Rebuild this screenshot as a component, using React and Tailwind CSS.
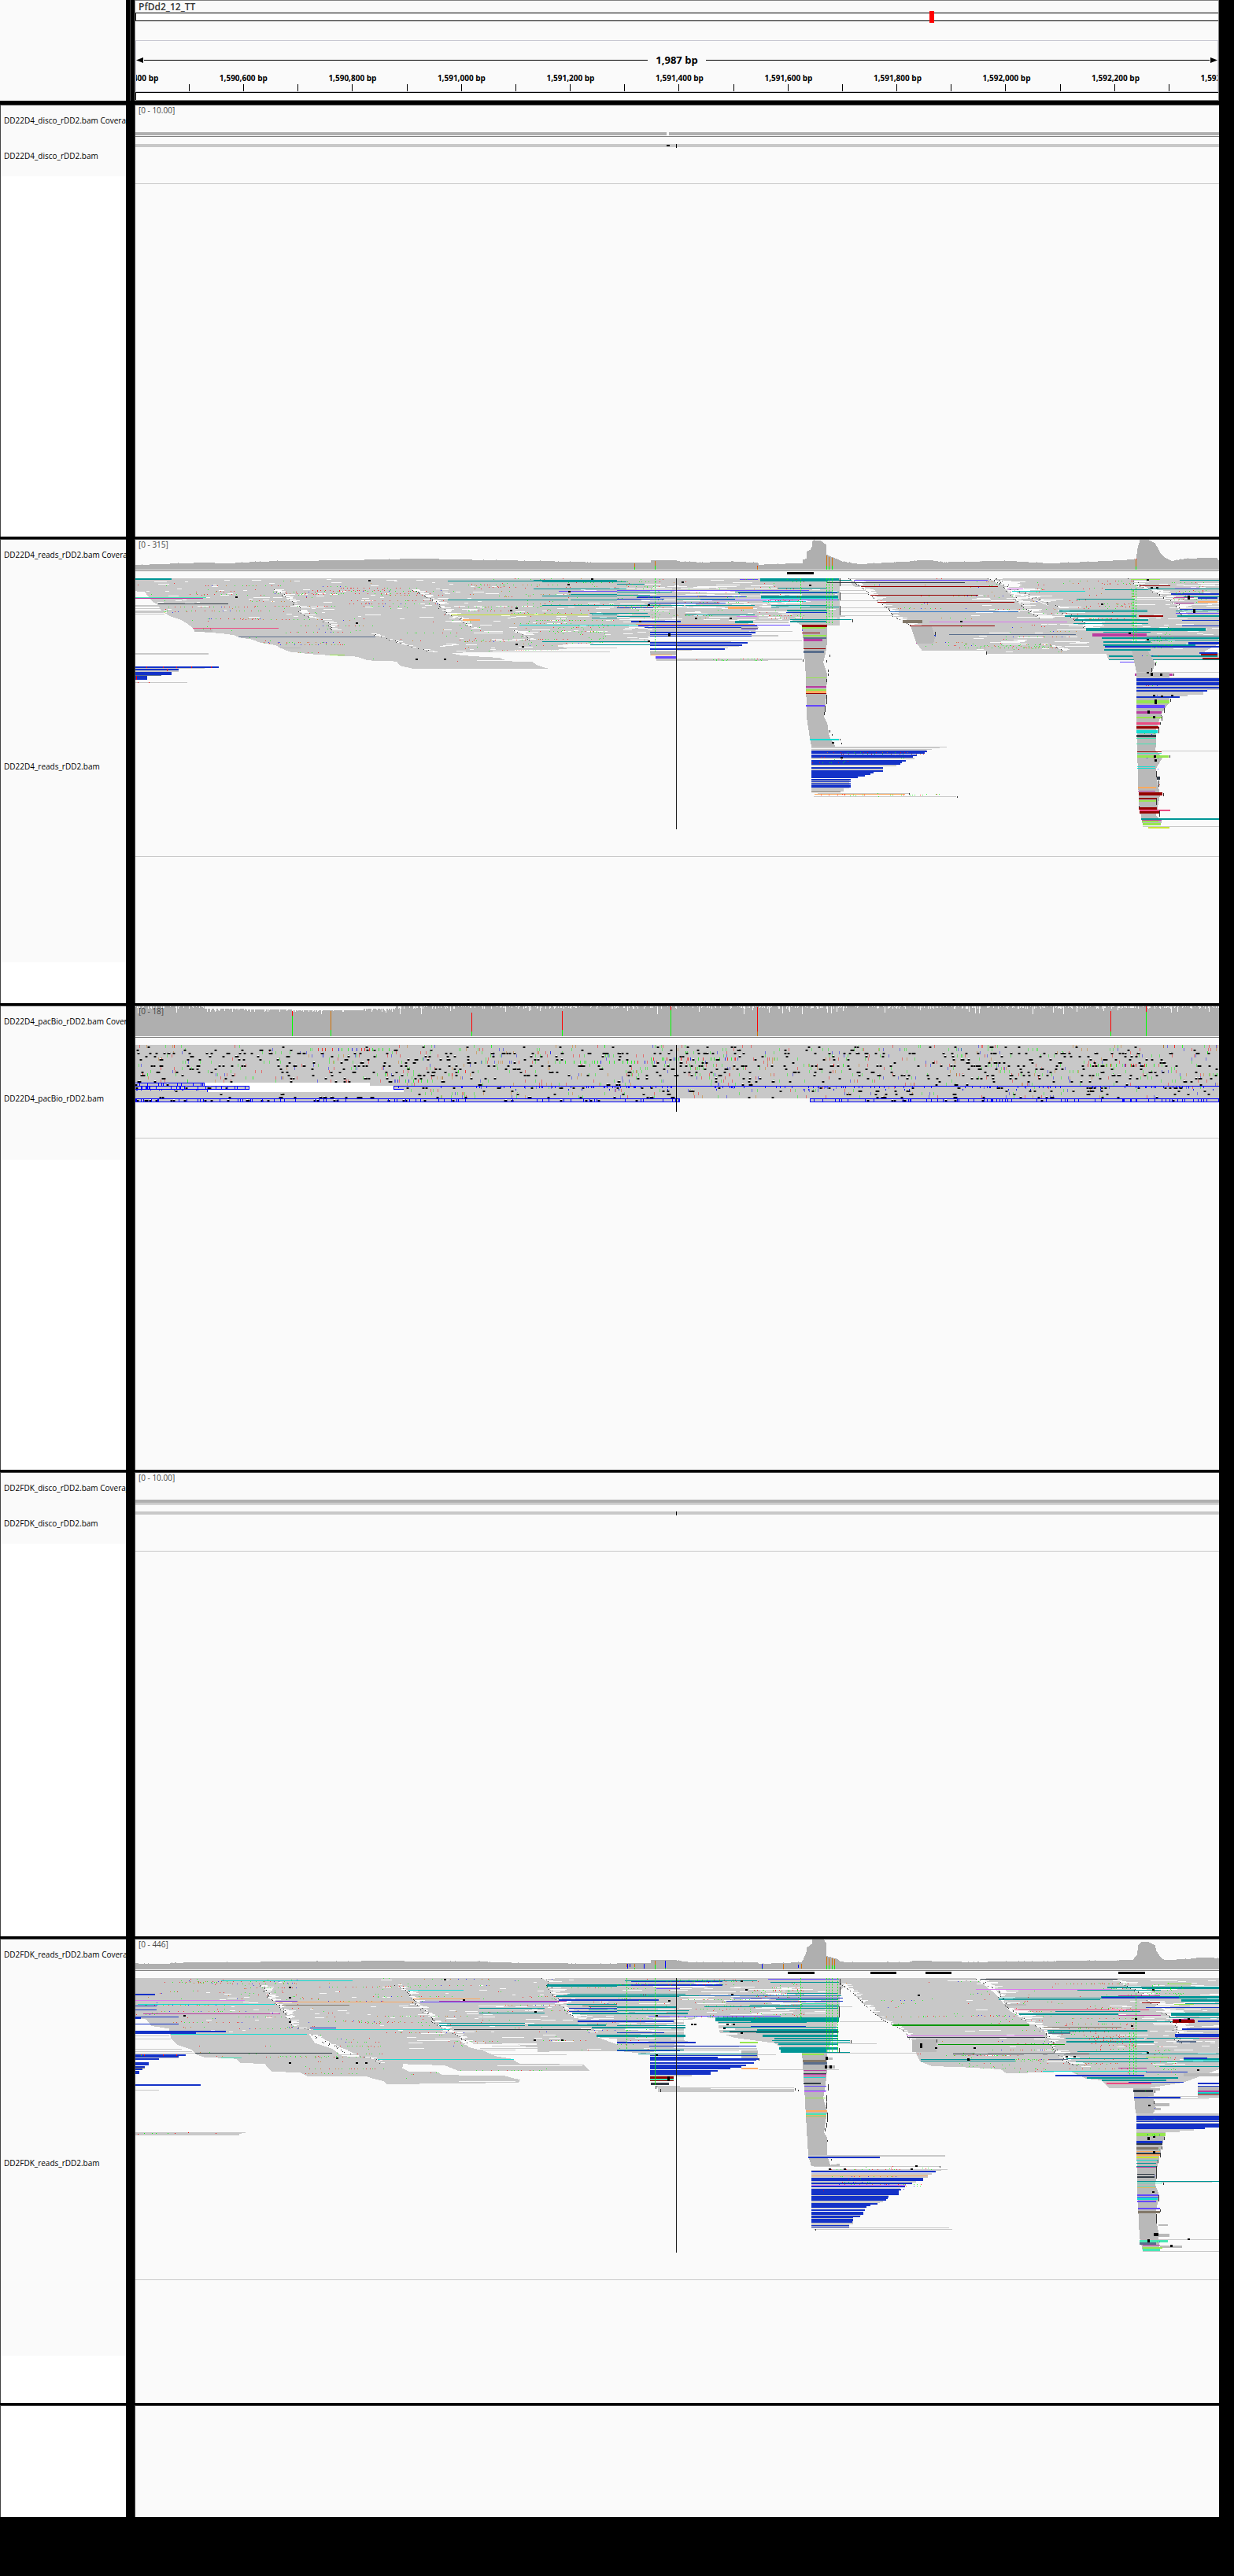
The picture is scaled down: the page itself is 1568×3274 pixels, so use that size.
import React from "react";

const C = {
  bg: "#fafafa",
  gray: "#c8c8c8",
  mid: "#b9b9b9",
  teal: "#009696",
  blue: "#1432c8",
  violet: "#6446ff",
  magenta: "#b93ca0",
  red: "#960000",
  pink: "#eb4b82",
  orange: "#ffaa5f",
  lime: "#96e650",
  cyan: "#14dcd2",
  slate: "#5a6e8c",
  coal: "#323c46",
  taupe: "#827869",
  orchid: "#dc78f0",
  mint: "#46e6b4",
  azure: "#3278c8",
  yellow: "#c8e632",
  green: "#009600",
  black: "#000000",
  A: "#00ff00",
  T: "#ff0000",
  C: "#0000ff",
  G: "#d17105",
};

function random(seed) {
  let s = seed;
  return () => {
    s = (s * 1664525 + 1013904223) % 4294967296;
    return s / 4294967296;
  };
}

// "x1 x2 y h" entries separated by commas; the height defaults to one row.
const barPath = (list) =>
  list
    .split(",")
    .map((item) => {
      const [a, b, y, h = 3] = item.trim().split(/\s+/).map(Number);
      return `M${a} ${y}H${b}v${h}H${a}z`;
    })
    .join("");

const Bars = ({ color, list }) => <path fill={color} d={barPath(list)} />;

// Horizontal streaks scattered over a box, snapped to read rows.
function Streaks({ box, n, min = 8, max = 40, color = C.bg, seed = 1 }) {
  const r = random(seed);
  const [x1, x2, y1, y2] = box;
  let d = "";
  for (let i = 0; i < n; i++) {
    const y = y1 + Math.floor((r() * (y2 - y1)) / 3) * 3;
    const w = Math.round((min + r() * r() * (max - min)) / 2) * 2;
    const x = x1 + Math.floor((r() * (x2 - x1)) / 2) * 2;
    d += `M${x} ${y}H${Math.min(x + w, x2)}v3H${x}z`;
  }
  return <path fill={color} d={d} />;
}

// Mismatched bases: runs of dots that share a row, or a column of a variant.
function Bases({ box, n, seed = 7, colors = "TTAAATGC", h = 3, step = 3, fade = false }) {
  const r = random(seed);
  const [x1, x2, y1, y2] = box;
  const paths = {};
  let left = n;
  while (left > 0) {
    const y = y1 + Math.floor((r() * (y2 - y1)) / step) * step;
    const run = r() < 0.25 && !fade ? 6 + Math.floor(r() * 14) : 1 + Math.floor(r() * 2);
    let x = x1 + r() * (x2 - x1);
    for (let k = 0; k < run; k++) {
      const c = colors[Math.floor(r() * colors.length)];
      const px = Math.round(x / 2) * 2;
      if (px < x2) paths[c] = (paths[c] || "") + `M${px} ${y}h2v${h}h-2z`;
      x += 4 + r() * 20;
      left--;
    }
  }
  return Object.keys(paths).map((c) => (
    <path key={c} fill={C[c] || c} fillOpacity={fade ? 0.45 : 0.75} d={paths[c]} />
  ));
}

// The ragged boundary between two stacks of reads.
function Seam({ points, seed = 3, spread = 14, width = 22 }) {
  const r = random(seed);
  const p = points.split(" ").map((s) => s.split(",").map(Number));
  let white = "";
  let dark = "";
  for (let i = 1; i < p.length; i++) {
    const [ax, ay] = p[i - 1];
    const [bx, by] = p[i];
    for (let y = ay; y < by; y += 3) {
      const x = Math.round((ax + ((bx - ax) * (y - ay)) / (by - ay) + r() * spread) / 2) * 2;
      const w = Math.round((4 + r() * width) / 2) * 2;
      if (r() < 0.72) white += `M${x} ${y}h${w}v3h-${w}z`;
      if (r() < 0.6) dark += `M${x - 2} ${y}h2v3h-2z`;
    }
  }
  return (
    <>
      <path fill={C.bg} d={white} />
      <path fill="#323232" d={dark} />
    </>
  );
}

const Inserts = ({ list }) => (
  <path
    fill={C.black}
    d={list
      .split(",")
      .map((s) => s.trim().split(/\s+/).map(Number))
      .map(([x, y, h = 6]) => `M${x} ${y}h6v${h}h-6z`)
      .join("")}
  />
);

// A tile is plotted at two units per pixel across and three units per pixel down.
const Tile = ({ x, y, children }) => (
  <g transform={`translate(${x},${-y / 3}) scale(0.5,${1 / 3})`}>{children}</g>
);

function Plot({ height, children }) {
  return (
    <svg
      className="block w-full"
      height={height}
      viewBox={`0 0 1377 ${height}`}
      preserveAspectRatio="none"
      shapeRendering="crispEdges"
      aria-hidden="true"
    >
      {children}
    </svg>
  );
}

// Steps a depth profile so that it looks binned, one bin per few bases.
function Depth({ points, base, seed = 5 }) {
  const r = random(seed);
  const p = points.split(" ").map((s) => s.split(",").map(Number));
  let d = `M${p[0][0]} ${base}`;
  for (let i = 1; i < p.length; i++) {
    const [ax, ay] = p[i - 1];
    const [bx, by] = p[i];
    for (let x = ax; x < bx; x += 2) {
      const y = ay + ((by - ay) * (x - ax)) / (bx - ax) - (r() < 0.06 ? 2 : 0);
      d += `H${x}V${Math.round(y / 3) * 3}`;
    }
  }
  d += `H${p[p.length - 1][0]}V${base}z`;
  return <path fill="#afafaf" d={d} />;
}

function FlatCoverage({ gap }) {
  return (
    <Plot height={38}>
      <rect x="0" y="34" width="1377" height="4" fill="#afafaf" />
      {gap && <rect x="675" y="34" width="3" height="4" fill={C.bg} />}
    </Plot>
  );
}

function FlatReads({ gap }) {
  return (
    <Plot height={59}>
      <rect x="0" y="9" width="1377" height="4" fill={C.gray} />
      {gap && <rect x="675" y="10" width="4" height="2" fill="#000" />}
      <rect x="687" y="9" width="1" height="5" fill="#000" />
    </Plot>
  );
}

function ReadsCoverageA() {
  return (
    <Plot height={38}>
      <Tile x={-172} y={48}>
        <Depth base={162} points="344,144 390,142 440,139 500,136 590,137 650,132 714,129 840,127 880,126 940,124 1030,121 1105,121 1160,124 1240,125 1300,127 1395,130 1470,133 1570,136" />
      </Tile>
      <Tile x={612} y={48}>
        <Depth base={162} seed={9} points="0,136 84,136 86,127 150,127 160,131 210,134 310,132 355,136 360,144 385,141 470,138 472,123 480,120 482,93 490,86 494,75 496,54 500,50 514,50 522,57 530,66 532,105 548,115 560,122 570,130 590,135 610,140 630,140 700,134 750,130 770,125 790,125 810,129 830,134 900,131 1000,129 1040,133 1100,138 1200,132 1240,129 1300,124 1318,122 1322,80 1328,48 1350,48 1366,60 1380,98 1390,115 1410,129 1440,121 1480,118 1524,118 1530,130" />
        <Bars color={C.G} list="44 46 138 15, 96 98 129 20, 356 358 150 12, 532 534 108 39, 538 540 114 36, 546 548 117 33, 1318 1320 123 27" />
        <Bars color={C.A} list="44 46 153 9, 96 98 147 15, 532 534 147 15, 538 540 150 12, 546 548 147 15, 1318 1320 150 12" />
        <Bars color={C.T} list="356 358 147 3, 1318 1320 120 3" />
      </Tile>
    </Plot>
  );
}

function ReadsA() {
  const west =
    "344,195 1568,195 1568,441 1450,444 1410,453 1440,459 1440,468 1268,470 1230,476 1145,480 1165,487 1200,492 1270,498 1284,507 1140,510 1352,512 1362,524 1380,534 1396,540 1050,540 1016,528 1008,512 935,508 908,494 850,490 790,484 735,475 712,460 700,450 660,440 640,428 612,422 595,412 562,405 516,400 494,398 492,388 478,370 462,355 430,338 412,320 400,295 386,282 376,262 368,247 344,244";
  const east1 = "0,195 566,195 566,375 470,375 440,350 435,366 330,366 360,381 350,396 290,402 84,440 0,440";
  const east2 =
    "588,195 945,195 980,225 1000,252 1035,262 1130,320 1170,350 1195,380 1235,430 1250,484 937,484 937,472 775,470 760,440 752,400 745,375 726,355 700,338 690,310 665,288 645,262 630,240 600,224";
  const east3 =
    "1120,195 1530,195 1530,445 1490,475 1530,480 1530,508 1250,508 1240,470 1235,440 1205,415 1190,380 1150,345 1120,320 1090,292 1045,265 980,232 960,195";
  return (
    <Plot height={362}>
      <defs>
        <clipPath id="a-west"><polygon points={west} /></clipPath>
        <clipPath id="a-mid"><polygon points={east2} /></clipPath>
        <clipPath id="a-end"><polygon points={east3} /></clipPath>
      </defs>
      <Tile x={-172} y={168}>
        <polygon fill={C.gray} points={west} />
        <g clipPath="url(#a-west)">
          <Streaks box={[360, 1560, 198, 350]} n={110} max={44} seed={11} />
          <Streaks box={[1100, 1560, 300, 480]} n={60} max={90} seed={12} />
          <Bases box={[344, 1130, 195, 405]} n={360} seed={21} />
          <Bases box={[1130, 1568, 195, 470]} n={330} seed={22} colors="AAAATTG" />
          <Bases box={[560, 1500, 400, 540]} n={170} seed={23} colors="TTAAGC" />
          <Bases box={[1340, 1540, 370, 440]} n={110} seed={24} colors="AAAAT" />
          <Bases box={[344, 1568, 225, 265]} n={120} seed={28} colors="TTTA" />
        </g>
        <Seam points="690,235 740,285 765,335 815,350 840,390" />
        <Seam points="1045,237 1095,275 1130,330 1165,345 1195,385" seed={4} />
        <Seam points="940,405 1010,440 1095,475" seed={5} width={14} />
        <Seam points="1300,390 1345,430" seed={6} width={26} />
        <Bars color={C.gray} list="344 410 297 6, 344 412 309, 344 416 318 9, 344 417 330, 344 530 480 6, 344 454 546 6, 344 520 537, 344 476 591, 1140 1550 474, 1400 1568 459" />
        <Bars color={C.teal} list="344 436 195 6, 1138 1568 204, 1356 1568 201, 1378 1568 207, 1356 1568 234, 1378 1568 261, 1450 1568 255, 1138 1444 276, 1450 1568 276, 1378 1568 297, 1500 1568 327, 1504 1568 333, 1504 1568 345, 1378 1568 435, 1500 1568 447" />
        <Bars color={C.blue} list="344 556 531 6, 344 454 540 6, 344 436 552 12, 344 374 567 15" />
        <Bars color={C.magenta} list="344 516 270" />
        <Bars color={C.pink} list="490 708 384" />
        <Bars color={C.coal} list="402 580 291" />
        <Bars color={C.slate} list="606 954 417, 344 410 564" />
        <Bars color={C.mint} list="344 524 267" />
        <Bars color={C.lime} list="838 876 486" />
        <Bars color={C.yellow} list="1146 1494 333" />
        <Bars color={C.orange} list="1176 1220 351 6" />
        <Bars color={C.cyan} list="1320 1568 372" />
        <Bars color={C.violet} list="1420 1568 243" />
        <Bars color={C.mid} list="494 540 390 9, 712 764 459" />
        <Bars color={C.T} list="350 352 591, 378 380 591, 372 374 531 6, 414 416 531 6, 448 450 531 6, 486 488 531 6, 536 538 531 6, 424 426 540 9, 346 348 567 15" />
        <Inserts list="936 202, 1442 216, 597 264, 903 363, 1295 315, 1310 307, 1310 444, 1326 453, 1056 501, 1128 502, 1502 195, 1443 243" />
      </Tile>
      <Tile x={612} y={168}>
        <polygon fill={C.gray} points={east1} />
        <polygon fill={C.gray} points={east2} />
        <polygon fill={C.gray} points={east3} />
        <Streaks box={[0, 470, 210, 360]} n={80} min={20} max={150} seed={31} />
        <Streaks box={[130, 560, 198, 360]} n={50} min={10} max={80} seed={32} />
        <Streaks box={[0, 90, 360, 440]} n={26} min={20} max={90} seed={33} />
        <Bars color={C.bg} list="566 700 312 60, 566 660 270 42, 566 630 228 42, 0 84 440 60, 84 350 400 40" />
        <Bars color={C.gray} list="566 620 204, 566 640 219, 566 648 240, 566 640 252, 566 690 279, 566 690 306, 566 690 321, 536 700 336, 536 580 339, 340 446 396, 84 350 393, 160 470 432, 84 410 411 6, 84 150 470 20, 150 310 453, 150 282 459, 150 190 468, 100 384 501 9, 384 470 504, 98 470 501, 940 1245 478 6, 84 290 435 6" />
        <g clipPath="url(#a-mid)">
          <Streaks box={[900, 1200, 195, 480]} n={55} min={14} max={120} seed={34} />
          <Bases box={[600, 1250, 195, 480]} n={230} seed={35} colors="TTAAAGC" />
          <Bases box={[800, 1120, 440, 470]} n={80} seed={36} colors="AAATG" />
        </g>
        <g clipPath="url(#a-end)">
          <Streaks box={[1300, 1530, 210, 470]} n={75} min={12} max={110} seed={37} />
          <Bases box={[1060, 1320, 200, 350]} n={170} seed={38} colors="AATTTG" />
        </g>
        <Seam points="588,195 630,240 645,262 665,288 690,310 700,338 726,355 745,375" seed={41} spread={4} width={26} />
        <Seam points="940,195 980,225 995,255 1030,310 1075,350" seed={42} width={44} />
        <Seam points="960,195 985,232 1045,265 1090,292 1130,330 1165,360 1190,390" seed={43} spread={24} width={60} />
        <Seam points="1295,195 1320,225 1380,260 1420,300 1425,340" seed={44} spread={20} width={34} />
        <Seam points="1075,445 1115,460 1125,472" seed={46} width={30} />
        <Bars color={C.teal} list="364 564 195 9, 0 24 207, 0 70 216, 0 24 234, 540 596 201, 364 536 204, 408 534 231, 0 140 246, 300 564 246, 0 84 258, 366 562 261 9, 150 300 273, 392 564 276, 0 170 297, 174 350 297, 392 534 297, 392 564 303, 432 532 315 6, 0 78 327, 174 350 333, 0 84 339, 440 596 351, 440 532 357 6, 300 345 357 8, 0 80 435, 0 84 447, 1430 1530 201, 1240 1350 237, 1350 1530 234, 1168 1316 273, 1124 1348 315, 1124 1348 321, 1138 1320 336 6, 1424 1530 336 6, 1164 1350 351 6, 1192 1496 384 12, 1236 1356 399, 1232 1530 420 6, 1236 1356 435 6, 1236 1470 447 6, 1350 1530 429, 1238 1356 465 6, 1250 1526 489 6, 1250 1530 504, 1160 1350 366, 1440 1530 264, 1420 1530 318" />
        <Bars color={C.blue} list="308 560 249, 50 110 264 6, 110 330 264, 0 120 273, 80 276 288, 0 92 306, 430 534 324, 36 162 357 6, 54 356 375, 70 316 381, 84 352 399 6, 84 342 408, 84 342 414, 84 332 438 6, 84 318 447 6, 84 274 462 6, 756 810 411 6, 1408 1530 252 6, 1476 1526 267 6, 1430 1530 312, 1436 1530 354, 1240 1530 453 6, 1452 1530 438 9, 1480 1526 477 6, 1436 1530 375" />
        <Bars color={C.violet} list="312 358 198, 602 942 201, 0 488 240, 212 560 276, 470 528 390 6, 54 440 372, 98 152 492 9, 316 358 387, 1278 1346 513, 1420 1530 327, 480 528 678 6, 1320 1392 678 12" />
        <Bars color={C.coal} list="534 884 210, 752 802 396, 474 516 396, 474 534 435, 1320 1388 690, 1320 1384 717, 1320 1370 792 9, 1324 1380 951 12, 1326 1370 1062 6" />
        <Bars color={C.cyan} list="366 562 270, 1004 1190 243, 370 480 282, 0 54 372" />
        <Bars color={C.red} list="620 968 225, 644 918 258, 662 1010 285, 744 960 375, 1328 1406 222, 1326 1388 336 6, 1484 1526 483 6, 1488 1530 498 6" />
        <Bars color={C.azure} list="694 1020 321" />
        <Bars color={C.orchid} list="794 1144 360, 992 1032 234, 304 356 339, 1418 1480 231" />
        <Bars color={C.slate} list="844 1166 408, 1208 1530 414" />
        <Bars color={C.taupe} list="726 776 354 12, 316 358 384" />
        <Bars color={C.orange} list="282 346 303 9, 48 350 369, 86 140 483 6, 1476 1526 282 6" />
        <Bars color={C.magenta} list="760 804 435 9, 1208 1346 405 12, 1416 1466 267, 1416 1466 288, 1316 1412 558 9" />
        <Bars color={C.lime} list="1306 1380 198" />
        <Bases box={[0, 120, 195, 355]} n={150} seed={51} colors="AAAAAT" />
        <Bases box={[130, 350, 195, 355]} n={90} seed={52} colors="AAATG" />
        <Bases box={[355, 475, 195, 350]} n={130} seed={53} colors="AATTT" />
        <Bases box={[1350, 1420, 380, 470]} n={90} seed={54} colors="AAAA" />
        <Bases box={[1410, 1500, 200, 300]} n={70} seed={57} colors="AAAT" />
        <Bases box={[180, 370, 501, 510]} n={40} seed={55} colors="AAAT" />
        <path stroke={C.A} strokeWidth="2" strokeDasharray="6 5" fill="none" d="M533 195V372M539 195V372M547 195V372M1319 220V440M1313 240V440M97 195V480M467 195V350M1309 240V380" />
        <path fill={C.mid} d="M470 372H534V440L530 480L524 515L534 560L532 640L526 725L534 745L540 800L555 836H494L490 805L482 725L480 570L474 440Z" />
        <path fill={C.mid} d="M746 378H800L808 420L804 445H762ZM1308 470H1348L1368 520L1360 552H1320ZM84 474H150V486H86Z" />
        <path fill={C.mid} d="M1320 552H1405L1404 668L1386 705L1370 770V830L1368 850L1386 880L1370 920L1372 960L1380 1020L1370 1100L1384 1120L1382 1138H1336L1326 1050L1322 850L1320 720Z" />
        <Bars color={C.gray} list="494 838 838, 494 820 841, 494 800 845, 494 785 849" />
        <Bars color={C.red} list="470 534 372 9, 470 516 402, 474 530 462, 480 532 633, 1320 1376 759 9, 1322 1384 855, 1326 1386 1011 12, 1326 1372 1032 6, 1326 1372 1067 10, 1328 1378 1083 9" />
        <Bars color={C.lime} list="470 530 382 6, 474 532 411 6, 480 532 573, 480 532 618 6, 1320 1404 660 12, 1320 1384 723 6, 1322 1402 870 9, 1326 1370 1042 4, 1334 1376 1119 6, 1336 1382 1128 9" />
        <Bars color={C.magenta} list="474 522 426 9, 480 532 606 6, 1320 1384 702 9, 1324 1368 1005, 1334 1384 1116" />
        <Bars color={C.slate} list="474 532 420 6, 474 526 471 9" />
        <Bars color={C.violet} list="480 528 678 6, 1320 1392 678 12" />
        <Bars color={C.orange} list="480 532 624 9, 502 732 1017, 1324 1370 990 6" />
        <Bars color={C.cyan} list="490 564 807 6, 1320 1374 774 12, 1320 1370 804, 1322 1368 912, 1322 1368 918" />
        <Bars color={C.mint} list="1320 1370 804, 1320 1370 825, 1322 1384 861" />
        <Bars color={C.coal} list="1320 1370 792 9" />
        <Bars color={C.pink} list="1320 1380 744 9, 1328 1406 1077 6" />
        <Bars color={C.gray} list="494 756 879 6, 494 710 906 6, 494 676 921 6, 494 590 960 35, 500 862 1026, 510 742 1014, 494 576 996 12, 1320 1530 552 3, 1320 1530 573 3, 1320 1530 588 3, 1320 1530 603 6, 1320 1530 615 6, 1320 1490 627 12, 1320 1450 639 6, 1384 1530 852, 1336 1530 1140" />
        <Bars color={C.blue} list="494 788 852 6, 494 782 858 6, 494 762 867 6, 494 752 873 6, 494 734 888 6, 494 724 894 6, 494 720 900 6, 494 676 915 6, 494 676 927 6, 494 652 933 6, 494 644 939 6, 494 630 945 6, 494 612 951 6, 494 594 960 6, 494 594 969, 494 594 975, 494 594 981 12, 1320 1530 576 12, 1320 1530 591 12, 1320 1530 609 6, 1320 1500 621 6, 1320 1430 645 6" />
        <Bars color={C.teal} list="1332 1530 1110 6" />
        <Bars color={C.yellow} list="1350 1404 1143 6" />
        <Bars color={C.taupe} list="494 568 1008" />
        <Bars color="#323232" list="540 542 487 9, 532 534 508 9, 536 538 544 9, 536 538 557 9, 532 534 578 12, 532 534 640 36, 528 530 680 24, 526 528 706 12, 540 542 775 9, 546 548 790 6, 566 568 807 6, 570 572 822 6, 742 744 1014 6, 864 866 1026 6, 1368 1370 516 12, 1358 1360 537 15, 1414 1416 558 9, 1406 1408 654 12, 1390 1392 690 18, 1384 1386 720 18, 1380 1382 744 9, 1376 1378 762 24, 1404 1406 870 9, 1370 1372 930 24, 1376 1378 966 24, 1388 1390 1014 12, 1370 1372 1035 24, 1378 1380 1080 24, 566 568 195 30, 566 568 250 30, 566 568 300 36, 598 600 350 12, 150 152 474 12, 808 810 399 12, 472 474 504 9, 938 940 474 12" />
        <Bases box={[494, 780, 852, 912]} n={50} seed={56} colors="ATG" />
        <Bases box={[505, 850, 1014, 1029]} n={26} seed={58} colors="AT" />
        <Bases box={[1330, 1380, 470, 1130]} n={50} seed={59} colors="ATC" />
        <Inserts list="163 208, 487 220, 78 294, 55 356, 130 405 12, 78 433, 197 346, 285 346, 871 357, 1230 292, 1300 401, 1450 260 15, 1463 312 15, 1356 555 12, 1345 553, 1380 557 9, 1365 657 18, 1348 699 12, 1361 720 9, 1363 870 9, 1366 884 9, 1362 640, 1408 640, 1382 641, 1345 198, 1356 229, 1370 229, 545 819, 568 876, 1345 427" />
        <rect x="432" y="171" width="68" height="9" fill="#000" />
        <rect x="150" y="195" width="2" height="957" fill="#1e1e1e" />
      </Tile>
    </Plot>
  );
}

function LongReadCoverage() {
  const r = random(77);
  let nicks = "";
  const cut = (x, d) => (nicks += `M${x} 0h1v${d}h-1z`);
  for (let x = 0; x < 1377; x++) {
    const thin = x > 88 && x < 330;
    if (r() < (thin ? 0.3 : 0.34)) cut(x, thin ? 4 + Math.floor(r() * 4) : 1 + Math.floor(r() * 2.6));
    if (r() < 0.03) cut(x, 5 + Math.floor(r() * 6));
  }
  return (
    <Plot height={38}>
      <rect width="1377" height="38" fill="#afafaf" />
      <path fill={C.bg} d={`${nicks}M88 0H330V3H290V5H200V4H140V3H88z`} />
      <Tile x={-172} y={207}>
        <Bars color={C.A} list="742 744 243 78, 840 842 297 24, 1198 1200 303 18, 1428 1430 297 24" />
        <Bars color={C.T} list="742 744 225 18, 1198 1200 231 72, 1428 1430 225 72" />
        <Bars color={C.G} list="840 842 225 72" />
      </Tile>
      <Tile x={612} y={207}>
        <Bars color={C.A} list="136 138 222 99, 1254 1256 303 18, 1344 1346 228 93" />
        <Bars color={C.T} list="136 138 207 15, 356 358 210 93, 1254 1256 225 78, 1344 1346 207 21" />
        <Bars color={C.G} list="356 358 303 18" />
      </Tile>
    </Plot>
  );
}

function LongReads() {
  const r = random(404);
  let dots = "";
  let shade = "";
  let halo = "";
  const rates = [15, 13, 60, 26, 28, 20, 54, 24, 30, 34, 24, 18, 10, 24, 22, 14, 26, 28];
  rates.forEach((n, row) => {
    const y = 11 + row * 4;
    for (let i = 0; i < n * 1.6; i++) {
      const x = Math.floor(r() * 1374);
      const hole =
        (row === 12 && x > 88 && x < 298) ||
        (row === 13 && x > 144 && x < 328) ||
        (row === 14 && x > 90 && x < 341) ||
        (row === 17 && x > 692 && x < 857);
      if (hole) continue;
      const w = r() < 0.15 ? 4 : 2;
      dots += `M${x} ${y}h${w}v2h-${w}z`;
      shade += `M${x - 1} ${y}h${w + 2}v2h-${w + 2}z`;
      if (r() < 0.35) halo += `M${x} ${y - 1}h2v1h-2z`;
    }
  });
  let notches = "";
  const notch = (x1, x2, y, n, h = 4) => {
    for (let i = 0; i < n; i++) notches += `M${Math.floor(x1 + r() * (x2 - x1))} ${y}h1v${h}h-1z`;
  };
  notch(0, 88, 57, 10);
  notch(0, 144, 61, 22);
  notch(0, 90, 65, 12, 2);
  notch(328, 1377, 61, 110, 3);
  notch(340, 1377, 65, 20, 2);
  notch(0, 692, 77, 62);
  notch(857, 1377, 77, 66);
  return (
    <Plot height={127}>
      <Tile x={0} y={-27}>
        <Bars color={C.gray} list="0 2754 0 219" />
        <Bars color="#ffffff" list="174 596 144 12, 289 656 156 12, 183 682 168 12" />
        <Bars color={C.bg} list="1384 1714 204 16" />
        <Bases box={[0, 2754, 0, 144]} n={620} h={12} step={12} colors="AATTCGA" fade seed={61} />
        <Bases box={[660, 2754, 144, 204]} n={160} h={12} step={12} colors="AATCG" fade seed={62} />
        <Bases box={[0, 2754, 0, 144]} n={90} h={12} step={12} colors="AATTC" seed={63} />
      </Tile>
      <path fill="#fff" d={halo} />
      <path fill="#000" fillOpacity="0.4" d={shade} />
      <path fill="#000" d={dots} />
      <path
        fill="none"
        stroke="#0000ff"
        d="M0 57.500H87.500V60.500M0 61.500H144.500V65.500H0M91.500 65.500V68.500M1377 61.500H328.500V65.500H341M0 77.500H691.500V81.500H0.500V77M1377 77.500H857.500V81.500H1377"
      />
      <path fill="#0000ff" d={notches} />
      <rect x="687" y="9" width="1" height="85" fill="#000" />
    </Plot>
  );
}

function ReadsCoverageB() {
  return (
    <Plot height={38}>
      <Tile x={-172} y={45}>
        <Depth base={159} seed={15} points="344,135 360,138 430,137 434,134 495,133 600,132 680,130 860,129 935,127 1020,127 1060,130 1210,129 1265,132 1310,134 1400,136 1570,138" />
      </Tile>
      <Tile x={612} y={45}>
        <Depth base={159} seed={16} points="0,136 84,136 86,124 150,124 170,129 190,132 315,131 355,133 360,138 400,136 468,132 472,122 480,94 482,75 494,62 496,45 524,45 530,58 532,108 548,115 560,120 566,130 600,132 740,132 750,127 790,127 830,130 920,131 1000,129 1100,129 1140,125 1240,127 1310,122 1320,105 1324,66 1332,54 1350,54 1366,66 1370,90 1380,112 1390,123 1450,120 1480,114 1530,116" />
        <Bars color={C.C} list="26 28 138 18, 32 34 138 12, 68 70 138 18, 122 124 126 30, 368 370 138 18, 460 462 142 12" />
        <Bars color={C.G} list="24 26 138 12, 44 46 138 12, 96 98 126 15, 422 424 138 21, 468 470 138 18, 532 534 111 33, 538 540 117 27, 546 548 117 27, 552 554 120 24" />
        <Bars color={C.A} list="44 46 153 6, 96 98 141 18, 122 124 153 6, 368 370 156, 532 534 144 15, 538 540 144 15, 546 548 144 15, 552 554 144 15" />
      </Tile>
    </Plot>
  );
}

function ReadsB() {
  const west =
    "344,192 1568,192 1568,470 1365,473 1365,457 1320,453 1318,444 1210,444 1190,455 1230,470 1260,490 1300,500 1320,518 1482,522 1500,546 1165,546 1130,525 1025,520 1022,535 1040,549 1110,550 1126,562 1280,564 1300,572 1322,580 1318,591 984,597 975,585 950,576 930,567 780,566 762,552 690,549 672,518 612,517 600,500 520,494 500,485 488,465 452,448 434,420 430,385 385,375 372,350 344,345";
  const east1 = "0,192 600,192 566,240 566,340 534,478 440,478 400,440 300,420 260,400 254,345 200,345 170,360 170,430 200,440 70,480 0,470";
  const east2 =
    "570,192 910,192 960,250 1000,320 1070,370 1100,420 1150,520 1210,546 990,556 975,540 880,532 800,528 770,510 760,480 750,430 730,395 700,370 670,345 640,310 620,280 600,250";
  const east3 =
    "930,192 1530,192 1530,540 1440,590 1350,612 1250,612 1230,582 1190,575 1150,546 1110,480 1090,420 1080,380 1030,340 990,300 965,240";
  return (
    <Plot height={392}>
      <defs>
        <clipPath id="b-west"><polygon points={west} /></clipPath>
        <clipPath id="b-mid"><polygon points={east2} /></clipPath>
        <clipPath id="b-end"><polygon points={east3} /></clipPath>
      </defs>
      <Tile x={-172} y={165}>
        <polygon fill={C.gray} points={west} />
        <g clipPath="url(#b-west)">
          <Streaks box={[500, 1560, 198, 400]} n={90} max={40} seed={71} />
          <Streaks box={[1000, 1560, 280, 470]} n={45} min={20} max={120} seed={72} />
          <Bases box={[344, 760, 192, 400]} n={260} seed={81} />
          <Bases box={[760, 1568, 192, 470]} n={380} seed={82} />
          <Bases box={[500, 980, 450, 560]} n={120} seed={83} colors="TAAG" />
          <Bases box={[1000, 1500, 520, 594]} n={60} seed={84} colors="AAT" />
        </g>
        <polygon fill={C.bg} points="785,405 812,414 845,445 885,470 920,492 870,490 845,462 800,440" />
        <polygon fill={C.bg} points="1160,420 1205,444 1318,446 1365,473 1240,475 1190,452" />
        <polygon fill={C.bg} points="1520,418 1568,424 1568,444 1540,430" />
        <Seam points="660,220 680,265 700,290 720,325 740,375 790,390" seed={91} />
        <Seam points="1000,220 1030,245 1045,280 1080,330 1105,372 1150,400 1180,440" seed={92} />
        <Seam points="1375,192 1400,250 1420,300 1450,345" seed={93} width={40} />
        <Seam points="790,408 830,445 880,480 950,500 965,518" seed={94} width={12} />
        <Bars color={C.gray} list="344 430 411, 344 434 423, 344 462 462, 344 488 471, 344 496 477, 1220 1568 459, 1230 1440 483, 1200 1310 465, 1250 1568 450, 810 910 483, 344 454 495, 344 404 618, 344 624 780, 344 614 783 3, 344 608 786 6" />
        <Bars color={C.bg} list="344 380 384, 1264 1480 525, 1026 1130 525, 1165 1310 585" />
        <Bars color={C.blue} list="344 394 252 6, 344 398 297, 344 398 312, 344 454 339, 344 358 342 6, 344 454 366, 344 574 393 6, 344 498 399 6, 344 472 483 6, 344 454 489 6, 344 404 498 6, 344 378 513 12, 344 368 528 6, 344 362 537 6, 344 354 546 12, 344 510 597 6, 788 854 381, 1420 1568 273 6, 1446 1568 306, 1446 1568 318, 1468 1568 354 6" />
        <Bars color={C.cyan} list="562 896 201, 350 698 291, 1038 1178 237, 796 1144 387, 434 780 405, 960 1306 501" />
        <Bars color={C.teal} list="1390 1568 216 9, 1442 1568 252, 1414 1568 258 6, 1440 1568 291, 1218 1384 306, 1496 1568 312, 1218 1384 324, 1454 1568 324 6, 1116 1334 363, 1116 1334 372, 1342 1540 369 6, 1504 1568 378 6, 1516 1568 408 9, 1496 1568 300" />
        <Bars color={C.orchid} list="344 622 276" />
        <Bars color={C.magenta} list="364 712 327, 1116 1440 279" />
        <Bars color={C.orange} list="700 1052 282, 1050 1220 270" />
        <Bars color={C.violet} list="700 756 279, 1068 1416 282" />
        <Bars color={C.coal} list="1154 1502 387, 496 844 477" />
        <Bars color={C.taupe} list="716 888 294, 344 368 534, 1480 1568 297" />
        <Bars color={C.mint} list="562 614 495" />
        <Bars color={C.T} list="358 360 483 6, 366 368 483 6, 414 416 483 6, 448 450 483 6, 350 352 786, 444 446 783, 478 480 780, 548 550 783" />
        <Bars color={C.A} list="358 360 486, 366 368 783, 386 388 783, 396 398 783, 426 428 783" />
        <Inserts list="733 225, 733 264, 733 358, 466 333, 1128 195, 1176 273, 1358 318, 1356 426, 1426 426, 854 495, 733 513, 903 513, 928 513" />
      </Tile>
      <Tile x={612} y={165}>
        <polygon fill={C.gray} points={east1} />
        <polygon fill={C.gray} points={east2} />
        <polygon fill={C.gray} points={east3} />
        <Streaks box={[0, 530, 210, 340]} n={80} min={20} max={150} seed={101} />
        <Streaks box={[0, 240, 340, 480]} n={44} min={30} max={150} seed={102} />
        <g clipPath="url(#b-mid)">
          <Streaks box={[840, 1190, 192, 520]} n={36} min={14} max={80} seed={103} />
          <Bases box={[560, 1200, 192, 540]} n={260} seed={104} colors="AAATTGC" />
          <Bases box={[880, 1100, 480, 556]} n={80} seed={105} colors="AAAT" />
        </g>
        <g clipPath="url(#b-end)">
          <Streaks box={[1250, 1530, 200, 520]} n={90} min={12} max={110} seed={106} />
          <Bases box={[1000, 1320, 200, 560]} n={300} seed={107} colors="AATTG" />
        </g>
        <Seam points="566,210 600,250 620,280 640,310 670,345 700,370 730,395 745,425" seed={111} spread={4} width={16} />
        <Seam points="910,192 960,240 980,290 1030,350 1065,380 1090,420" seed={112} width={44} />
        <Seam points="1095,430 1110,480 1150,520 1180,530" seed={113} width={36} />
        <Seam points="1270,205 1320,250 1370,310 1410,370 1420,440" seed={114} spread={20} width={46} />
        <Bars color={C.bg} list="566 600 255 45, 566 640 306 48, 566 680 360 40, 170 254 350 6, 200 290 366 6, 190 300 384 6, 180 306 402 6, 150 310 441, 150 310 450, 150 310 462" />
        <Bars color={C.gray} list="566 680 357, 566 598 300, 0 170 435, 534 660 441, 534 760 477, 84 404 483, 84 310 453, 84 356 459 6, 84 310 468" />
        <Bars color={C.mid} list="316 358 468 30, 286 356 396 6, 750 812 426 47, 1440 1530 555 12, 1476 1530 606 42, 984 1040 291 6, 98 160 603 6" />
        <Bars color={C.teal} list="20 356 201, 390 564 207, 0 84 216 6, 0 174 252, 0 158 258 6, 150 570 258, 432 560 249, 404 562 273, 294 574 279, 0 152 300 6, 222 564 300, 404 562 306, 338 564 294, 0 184 315, 0 180 324 6, 250 564 342 15, 340 564 357, 0 174 372 3, 0 174 378 6, 258 482 360 3, 270 562 378, 356 562 387 9, 270 562 393, 354 562 399, 370 562 408 9, 394 592 429, 400 562 420 6, 400 592 435, 410 562 441 6, 412 562 456 9, 416 532 465 12, 434 592 474, 0 174 408 9, 0 170 465, 54 356 480, 1246 1530 225 6, 1170 1382 237, 1334 1530 231, 1230 1530 261 9, 970 1230 267, 970 1228 273, 1434 1530 273 9, 1444 1530 288, 1114 1330 318, 1022 1274 327 6, 1408 1530 324 12, 1404 1530 342, 1222 1420 357, 1094 1348 390 6, 1096 1152 399 6, 1140 1340 420, 1346 1530 420, 1142 1364 432 6, 1184 1530 480, 1170 1350 471, 1142 1350 498, 1166 1530 510, 772 1012 501, 772 1012 507, 1194 1426 570 6, 1232 1396 579 6, 1380 1530 528, 1440 1530 498 6" />
        <Bars color={C.blue} list="36 268 204, 36 268 216, 36 268 219, 0 106 273 6, 296 574 267, 278 574 279, 0 144 354 6, 340 480 375, 0 120 399, 0 200 435 6, 82 354 450, 0 160 468, 84 356 486, 84 256 492 6, 84 362 498 6, 84 354 504 3, 84 348 513 6, 84 328 522 6, 84 316 528 6, 84 288 534 6, 84 256 543 6, 84 238 549 12, 1232 1428 264 6, 1114 1340 561 6, 1476 1530 354 6, 1436 1530 384 6, 1418 1530 405 12, 1344 1530 303, 1476 1530 591 6, 1476 1530 603, 1440 1500 495 6, 1344 1450 549, 1300 1440 588" />
        <Bars color={C.violet} list="384 564 195, 100 160 231, 80 416 336, 400 480 396" />
        <Bars color={C.coal} list="924 1272 195, 286 564 396, 738 1088 417, 854 1200 480" />
        <Bars color={C.orchid} list="912 1258 234, 736 1084 411, 470 520 486 9" />
        <Bars color={C.azure} list="208 560 258" />
        <Bars color={C.green} list="700 1048 369 6, 816 1138 444" />
        <Bars color={C.pink} list="1010 1352 312, 1244 1358 591 6" />
        <Bars color={C.taupe} list="1084 1282 378" />
        <Bars color={C.cyan} list="1082 1346 546, 1440 1530 504, 1476 1530 628 6" />
        <Bars color={C.magenta} list="1274 1380 258, 1274 1382 333, 1274 1346 534, 1476 1530 621 6, 1480 1530 420, 1412 1466 348" />
        <Bars color={C.red} list="1334 1380 285, 1412 1468 351 12, 84 144 567 9, 84 144 582, 1476 1530 634" />
        <Bars color={C.slate} list="1096 1152 402, 1422 1472 432 6, 1098 1146 501" />
        <Bars color={C.lime} list="1398 1460 213, 312 358 435 6, 1416 1466 291, 1344 1400 492" />
        <Bars color={C.mint} list="470 534 288, 84 144 576 6" />
        <Bars color={C.orange} list="316 358 534 6" />
        <Bars color={C.coal} list="86 132 591 9" />
        <Bars color={C.gray} list="84 190 561 6, 104 450 609 18, 360 564 540, 104 160 603 6" />
        <Bars color={C.bg} list="238 450 612" />
        <Bases box={[0, 80, 195, 470]} n={130} seed={121} colors="AAAAT" />
        <Bases box={[84, 340, 195, 345]} n={110} seed={122} colors="AAT" />
        <Bases box={[340, 475, 195, 350]} n={150} seed={123} colors="AATT" />
        <Bases box={[1340, 1440, 200, 260]} n={90} seed={124} colors="AAA" />
        <Bases box={[1350, 1420, 440, 560]} n={90} seed={128} colors="AAAT" />
        <Bases box={[1180, 1320, 400, 470]} n={110} seed={125} colors="AATTT" />
        <path stroke={C.A} strokeWidth="2" strokeDasharray="6 5" fill="none" d="M533 192V478M539 192V478M547 192V478M561 192V478M97 192V480M1303 400V560M1313 400V560M1319 250V560M467 192V350M25 192V470" />
        <path stroke={C.A} strokeWidth="2" fill="none" d="M97 486V600" />
        <path fill={C.mid} d="M470 478H534V540L530 600L524 650L534 700L526 780L534 800V868L542 905L566 900V910H494L486 868L480 720L474 560Z" />
        <path fill={C.mid} d="M1312 612H1364V630L1364 655L1370 690L1362 708H1318Z" />
        <path fill={C.mid} d="M1320 780H1394L1382 850L1372 920L1368 980L1378 1020L1370 1080L1372 1130L1376 1160V1184L1380 1232H1336L1328 1180L1322 1000Z" />
        <Bars color={C.mid} list="534 548 495 9, 534 554 526 12, 1364 1404 669 12, 1364 1382 687 9, 1376 1404 1167 12, 1376 1400 1131 6, 1380 1436 1212 9, 1360 1380 612 9" />
        <Bars color={C.taupe} list="472 532 504 9, 1320 1376 837 9, 1324 1380 1080 9" />
        <Bars color={C.slate} list="474 534 514 8, 1328 1370 1201 8" />
        <Bars color={C.coal} list="474 532 555 3, 474 518 591 6, 1312 1362 618 9, 1320 1386 822 6, 1320 1380 858 6, 1322 1366 939, 1322 1366 948 6" />
        <Bars color={C.magenta} list="474 532 543, 474 532 558, 474 532 564, 1320 1370 912, 1336 1380 1209" />
        <Bars color={C.cyan} list="474 530 570, 1320 1376 885, 1322 1374 1029 9" />
        <Bars color={C.violet} list="476 532 603, 476 532 621, 1322 1376 1017 6, 1322 1376 1026, 1322 1370 1041 6, 1324 1380 1068 6" />
        <Bars color={C.orchid} list="476 530 624" />
        <Bars color={C.lime} list="478 530 648, 470 526 480 6, 1320 1394 783 12, 1336 1386 1218 6" />
        <Bars color={C.orange} list="480 534 696 6, 480 532 714 3, 480 532 720, 1320 1380 852, 1320 1380 864 6, 1322 1368 990" />
        <Bars color={C.mint} list="480 532 708 6, 480 532 717, 1322 1386 972, 1322 1368 987, 1328 1400 1191 9, 1336 1380 1224 9" />
        <Bars color={C.yellow} list="1320 1376 873 6" />
        <Bars color={C.gray} list="486 834 867 6, 500 820 909, 540 840 921, 494 824 924, 494 800 936 6, 494 790 942 12, 494 760 966 6, 494 734 978 6, 494 720 993, 494 690 1020, 494 675 1041 6, 494 668 1047, 494 630 1068, 494 620 1095, 494 600 1107 24, 494 590 1131 9, 494 844 1143, 500 852 1149, 1320 1530 708 9, 1320 1530 735, 1320 1530 744, 1320 1430 768 12, 1430 1466 768 5, 1384 1512 969, 1376 1530 1188, 1336 1530 1233, 1330 1504 651, 1350 1530 642" />
        <Bars color={C.blue} list="486 668 873 6, 494 810 927 6, 494 778 954 12, 494 750 972 6, 494 732 984 6, 494 722 996 6, 494 716 1002 18, 494 690 1023 6, 494 688 1029 6, 494 684 1035 6, 494 662 1050 6, 494 644 1056 6, 494 634 1062 6, 494 630 1074 6, 494 626 1083 12, 494 618 1098 6, 494 600 1104 3, 494 600 1110 9, 494 598 1119 6, 494 590 1134, 494 590 1140, 1314 1432 645 6, 1320 1530 717 18, 1320 1530 738, 1320 1530 747, 1320 1530 751 11, 1320 1494 762 6, 1320 1386 813 9" />
        <Bars color={C.orange} list="494 790 945" />
        <Bars color={C.orchid} list="494 734 981" />
        <Bars color={C.teal} list="1322 1530 966, 1320 1370 897, 1320 1370 909" />
        <Bars color="#323232" list="536 538 597 24, 532 534 640 24, 532 534 666 24, 534 536 705 36, 532 534 744 18, 528 530 766 12, 534 536 810 6, 544 546 882 6, 820 822 909 6, 566 568 195 24, 566 568 225 30, 564 566 300 42, 594 596 429 12, 564 566 460 18, 452 454 612 9, 460 462 618 6, 1366 1368 621 9, 1364 1366 660 12, 1390 1392 798 12, 1384 1386 834 12, 1380 1382 858 18, 1374 1376 885 12, 1370 1372 910 48, 1376 1378 1020 24, 1380 1382 1074 9, 1370 1372 1092 36, 812 814 427 12, 98 100 603 12, 110 112 615 12, 360 362 498 9, 1388 1390 972 9, 504 506 1150 6" />
        <Bases box={[494, 780, 936, 1010]} n={60} seed={126} colors="ATGC" />
        <Bases box={[500, 800, 909, 924]} n={24} seed={129} colors="AT" />
        <Bases box={[1330, 1380, 620, 1200]} n={46} seed={127} colors="ATC" />
        <Inserts list="313 202, 326 235, 290 252, 130 276, 98 334, 188 367, 196 367, 277 366, 270 382, 293 367, 313 398, 98 483, 128 567 18, 764 255, 770 441 18, 905 456, 890 499 9, 808 456, 1316 345, 1360 234, 1305 373, 1428 349 12, 1450 345, 1140 489, 1160 489, 530 492 12, 528 526 12, 539 526 12, 537 918, 576 918, 758 907, 745 918, 1350 676, 1348 799 12, 1361 794, 1361 852 9, 1360 1006, 1363 1164 12, 1370 1164 12, 1347 1188 12, 1450 1186, 1405 1210 9, 1345 475, 1474 540" />
        <Bars color="#000000" list="434 502 168 9, 644 710 168 9, 784 850 168 9, 1274 1342 168 9" />
        <rect x="150" y="192" width="2" height="1046" fill="#1e1e1e" />
      </Tile>
    </Plot>
  );
}

function TrackRow({ name, range, height, labelHeight, coverage, children }) {
  return (
    <section className={`mb-[3px] flex ${height}`}>
      <div className="w-40 shrink-0 overflow-hidden border-t border-l border-[#444] bg-white text-[10px] leading-4 whitespace-nowrap text-black">
        {name && (
          <div className={`flex flex-col bg-[#fafafa] pl-1 ${labelHeight}`}>
            <h2 className="flex h-[38px] shrink-0 items-center">{name} Coverage</h2>
            <h2 className="flex flex-1 items-center">{name}</h2>
          </div>
        )}
      </div>
      <div className="ml-[11px] min-w-0 flex-1 border-t border-l border-[#444] bg-[#fafafa]">
        {name && (
          <>
            <div className="relative">
              {coverage}
              <span className="absolute top-0 left-1 text-[10px] leading-3 text-[#444]">{range}</span>
            </div>
            <div className="mt-px h-px bg-[#808080]" />
            {children}
            <div className="h-px bg-[#c8c8c8]" />
          </>
        )}
      </div>
    </section>
  );
}

const POSITIONS = [
  "1,590,400 bp",
  "1,590,600 bp",
  "1,590,800 bp",
  "1,591,000 bp",
  "1,591,200 bp",
  "1,591,400 bp",
  "1,591,600 bp",
  "1,591,800 bp",
  "1,592,000 bp",
  "1,592,200 bp",
  "1,592,400 bp",
];

function Header() {
  return (
    <header className="mb-[5px] flex h-32">
      <div className="w-40 shrink-0 bg-[#fafafa]" />
      <div className="ml-[5px] w-px bg-[#444]" />
      <div className="ml-[5px] flex min-w-0 flex-1 flex-col overflow-hidden border border-[#808080] bg-[#fafafa]">
        <h1 className="h-[15px] pl-1 text-[12px] leading-[15px] font-semibold text-[#333]">PfDd2_12_TT</h1>
        <div className="relative h-[11px] shrink-0 border-y border-l border-black bg-white">
          <span className="absolute -top-[3px] left-[73.3%] h-[15px] w-[6px] bg-[#ff0000]" />
        </div>
        <div className="mt-6 flex h-[66px] shrink-0 flex-col border border-[#c8c8d2]">
          <div className="mt-4 flex h-4 items-center">
            <svg width="10" height="7" viewBox="0 0 10 7" aria-hidden="true"><path d="M0 3.500L9 0V7z" /></svg>
            <span className="h-px flex-1 bg-black" />
            <span className="w-[74px] text-center text-[13px] leading-4 font-bold">1,987 bp</span>
            <span className="h-px flex-1 bg-black" />
            <svg width="10" height="7" viewBox="0 0 10 7" aria-hidden="true"><path d="M10 3.500L1 0V7z" /></svg>
          </div>
          <div className="mt-[7px] h-4 overflow-hidden">
            <div className="-ml-[5.2%] grid w-[110.9%] grid-cols-11">
              {POSITIONS.map((p) => (
                <span key={p} className="text-center text-[10px] leading-4 font-bold whitespace-nowrap">
                  {p}
                </span>
              ))}
            </div>
          </div>
          <div className="-ml-[0.1%] flex h-[9px] overflow-hidden">
            {POSITIONS.concat(POSITIONS).slice(3).map((p, i) => (
              <span key={i} className="w-[5.03%] shrink-0 border-r border-black" />
            ))}
          </div>
        </div>
        <div className="flex-1 border-t border-l border-black bg-white" />
      </div>
    </header>
  );
}

export default function App() {
  return (
    <main className="min-h-screen bg-black pr-[19px] font-['Open_Sans','Noto_Sans',sans-serif]">
      <Header />
      <TrackRow name="DD22D4_disco_rDD2.bam" range="[0 - 10.00]" height="h-[549px]" labelHeight="h-[90px]" coverage={<FlatCoverage gap />}>
        <FlatReads gap />
      </TrackRow>
      <TrackRow name="DD22D4_reads_rDD2.bam" range="[0 - 315]" height="h-[590px]" labelHeight="h-[537px]" coverage={<ReadsCoverageA />}>
        <ReadsA />
      </TrackRow>
      <TrackRow name="DD22D4_pacBio_rDD2.bam" range="[0 - 18]" height="h-[590px]" labelHeight="h-[195px]" coverage={<LongReadCoverage />}>
        <LongReads />
      </TrackRow>
      <TrackRow name="DD2FDK_disco_rDD2.bam" range="[0 - 10.00]" height="h-[590px]" labelHeight="h-[90px]" coverage={<FlatCoverage />}>
        <FlatReads />
      </TrackRow>
      <TrackRow name="DD2FDK_reads_rDD2.bam" range="[0 - 446]" height="h-[590px]" labelHeight="h-[529px]" coverage={<ReadsCoverageB />}>
        <ReadsB />
      </TrackRow>
      <TrackRow height="h-[142px]" />
    </main>
  );
}
